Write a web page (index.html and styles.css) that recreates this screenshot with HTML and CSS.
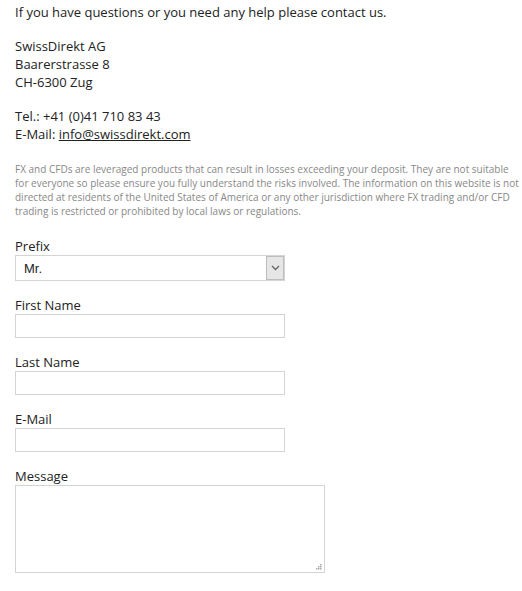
FILE: index.html
```html
<!DOCTYPE html>
<html>
<head>
<meta charset="utf-8">
<link rel="stylesheet" href="styles.css">
</head>
<body>
<div class="page">
  <p class="block">If you have questions or you need any help please contact us.</p>
  <p class="block">SwissDirekt AG<br>Baarerstrasse 8<br>CH-6300 Zug</p>
  <p class="block block-last">Tel.: +41 (0)41 710 83 43<br>E-Mail: <a href="#" class="mail">info@swissdirekt.com</a></p>
  <p class="disclaimer">FX and CFDs are leveraged products that can result in losses exceeding your deposit. They are not suitable for everyone so please ensure you fully understand the risks involved. The information on this website is not directed at residents of the United States of America or any other jurisdiction where FX trading and/or CFD trading is restricted or prohibited by local laws or regulations.</p>
  <form class="form">
    <div class="field">
      <label class="label">Prefix</label>
      <div class="select-wrap">
        <select class="select"><option>Mr.</option><option>Mrs.</option></select>
        <span class="arrow"><svg width="9" height="6" viewBox="0 0 9 6"><path d="M1 1 L4.5 4.5 L8 1" fill="none" stroke="#666" stroke-width="1.3"/></svg></span>
      </div>
    </div>
    <div class="field">
      <label class="label">First Name</label>
      <input class="input" type="text">
    </div>
    <div class="field">
      <label class="label">Last Name</label>
      <input class="input" type="text">
    </div>
    <div class="field">
      <label class="label">E-Mail</label>
      <input class="input" type="text">
    </div>
    <div class="field">
      <label class="label">Message</label>
      <div class="ta-wrap">
        <textarea class="textarea"></textarea>
        <span class="grip"><svg width="6" height="6" viewBox="0 0 6 6"><g fill="#aaa"><rect x="4" y="0" width="1.5" height="1.5"/><rect x="2" y="2" width="1.5" height="1.5"/><rect x="4" y="2" width="1.5" height="1.5"/><rect x="0" y="4" width="1.5" height="1.5"/><rect x="2" y="4" width="1.5" height="1.5"/><rect x="4" y="4" width="1.5" height="1.5"/></g></svg></span>
      </div>
    </div>
  </form>
</div>
</body>
</html>
```
FILE: styles.css
```css
html, body {
  margin: 0;
  padding: 0;
  background: #fff;
}
.page {
  padding: 3px 2px 0 15px;
  font-family: "Open Sans", "Liberation Sans", sans-serif;
  font-size: 13px;
  line-height: 18px;
  color: #222;
}
.block {
  margin: 0 0 16px 0;
}
.block-last {
  margin-bottom: 19px;
}
.mail {
  color: #222;
  text-decoration: underline;
}
.disclaimer {
  margin: 0;
  font-size: 10px;
  line-height: 14px;
  color: #888;
}
.form {
  margin-top: 19px;
}
.field {
  display: flex;
  flex-direction: column;
  align-items: flex-start;
  margin-bottom: 15px;
}
.label {
  font-size: 13px;
  line-height: 18px;
  color: #222;
}
.input {
  box-sizing: border-box;
  width: 270px;
  height: 24px;
  border: 1px solid #d4d4d4;
  margin: 0;
  padding: 2px 4px;
  font: inherit;
}
.select-wrap {
  position: relative;
  width: 270px;
  height: 26px;
}
.select {
  appearance: none;
  -webkit-appearance: none;
  box-sizing: border-box;
  width: 270px;
  height: 26px;
  border: 1px solid #d4d4d4;
  background: #fff;
  margin: 0;
  padding: 0 0 0 8px;
  font-family: "Liberation Sans", Arial, sans-serif;
  font-size: 13px;
  color: #222;
}
.arrow {
  position: absolute;
  right: 1px;
  top: 1px;
  width: 16px;
  height: 22px;
  background: #e6e6e6;
  border: 1px solid #bdbdbd;
  display: flex;
  align-items: center;
  justify-content: center;
}
.ta-wrap {
  position: relative;
  width: 310px;
  height: 88px;
}
.textarea {
  box-sizing: border-box;
  width: 310px;
  height: 88px;
  border: 1px solid #d4d4d4;
  margin: 0;
  resize: none;
  display: block;
  font: inherit;
}
.grip {
  position: absolute;
  right: 3px;
  bottom: 3px;
  width: 6px;
  height: 6px;
  display: block;
  line-height: 0;
}
```
